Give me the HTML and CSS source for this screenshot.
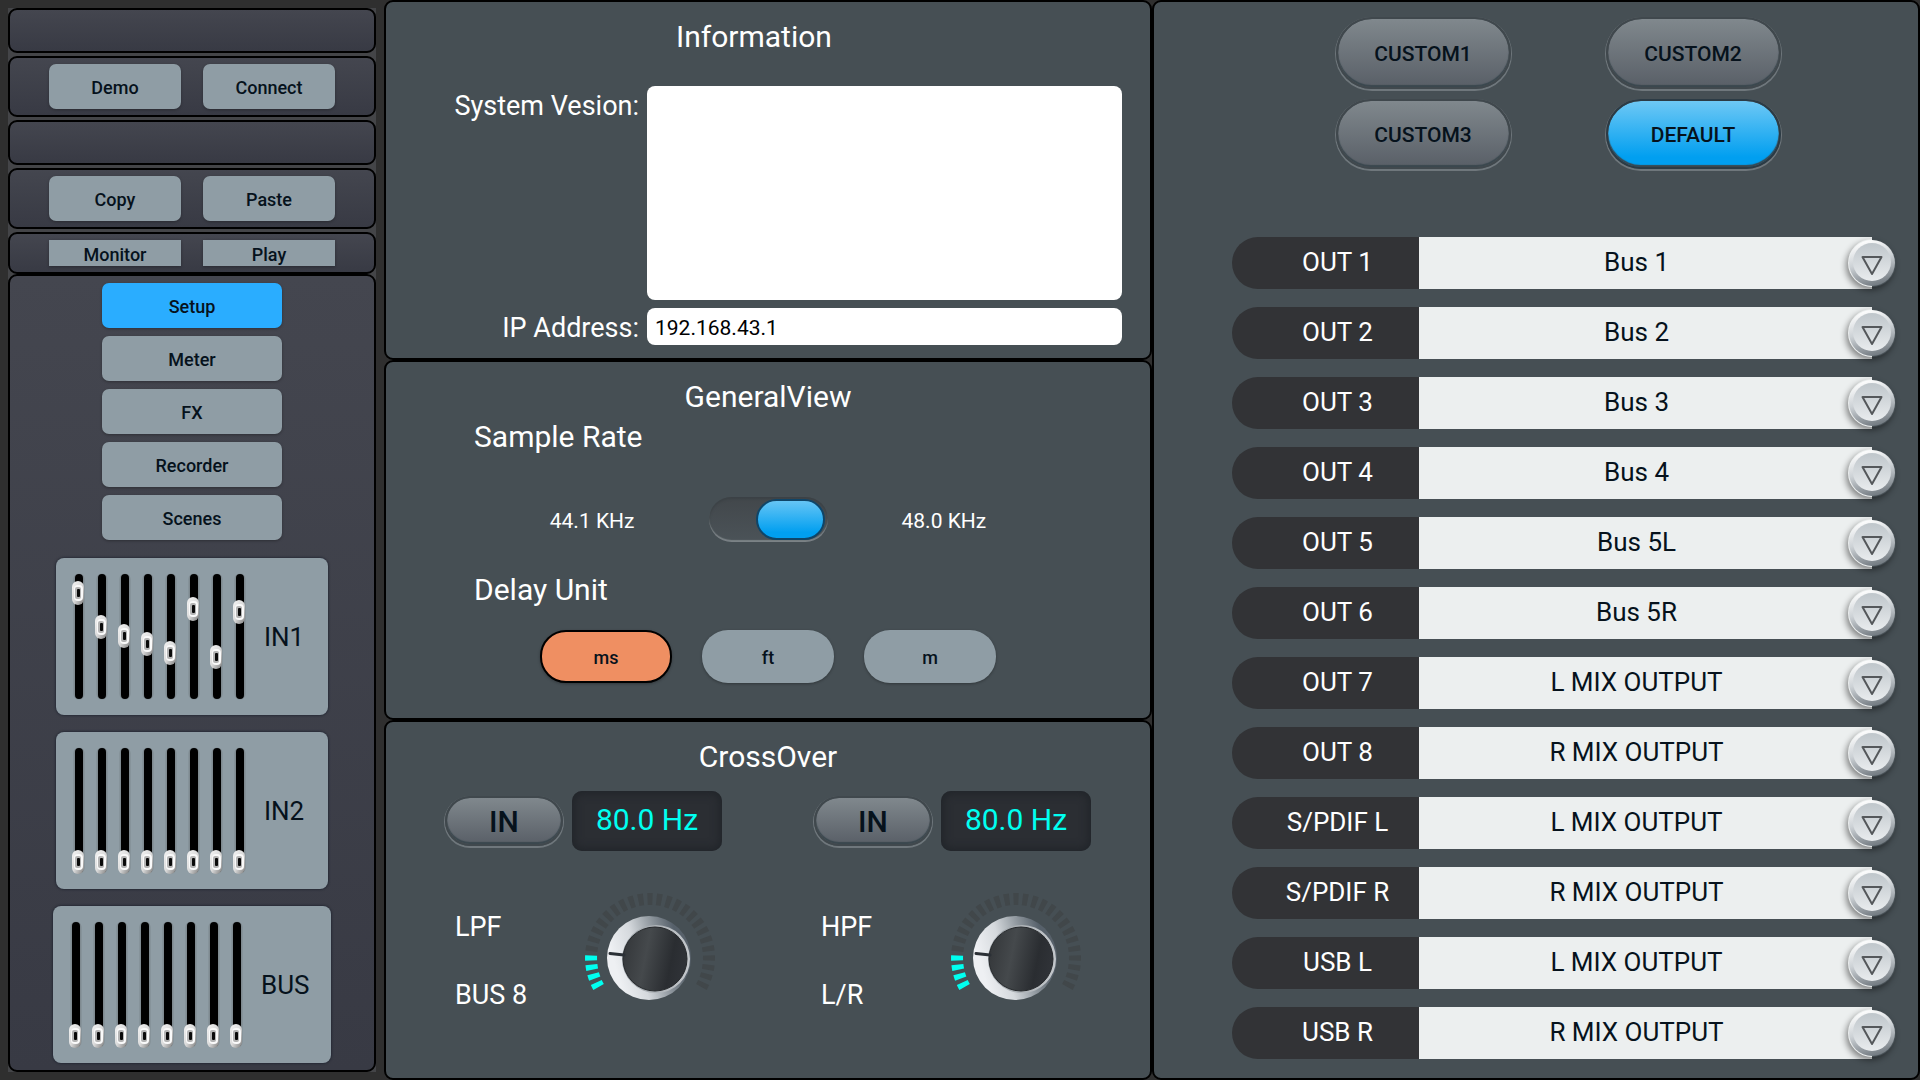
FILE: index.html
```html
<!DOCTYPE html>
<html lang="en">
<head>
    <meta charset="UTF-8">
    <meta name="viewport" content="width=device-width, initial-scale=1.0">
    <title>Mixer Setup</title>
    <link rel="stylesheet" href="styles.css">
</head>
<body>

    <!-- Shared drawings -->
    <svg class="defs" width="0" height="0" aria-hidden="true">
        <defs>
            <linearGradient id="thumbFill" x1="0" y1="0" x2="1" y2="1">
                <stop offset="0" stop-color="#f4f4f4"/>
                <stop offset="0.5" stop-color="#dcdcdc"/>
                <stop offset="1" stop-color="#7d7d7d"/>
            </linearGradient>
            <linearGradient id="ringFill" x1="0.1" y1="0.6" x2="1" y2="0.35">
                <stop offset="0" stop-color="#eef0f3"/>
                <stop offset="0.3" stop-color="#d5d9dd"/>
                <stop offset="0.6" stop-color="#8d959c"/>
                <stop offset="0.85" stop-color="#56606a"/>
                <stop offset="1" stop-color="#59626b"/>
            </linearGradient>
            <linearGradient id="capFill" x1="0" y1="0.4" x2="1" y2="0.6">
                <stop offset="0" stop-color="#35383b"/>
                <stop offset="0.35" stop-color="#45494c"/>
                <stop offset="0.75" stop-color="#2a2d31"/>
                <stop offset="1" stop-color="#303338"/>
            </linearGradient>
            <linearGradient id="rimFill" x1="0" y1="0" x2="1" y2="0">
                <stop offset="0" stop-color="#9aa0a5"/>
                <stop offset="1" stop-color="#c3c7cb"/>
            </linearGradient>
            <linearGradient id="arrowRim" x1="0.35" y1="0" x2="0.65" y2="1">
                <stop offset="0" stop-color="#fff"/>
                <stop offset="0.45" stop-color="#cdd2d6"/>
                <stop offset="1" stop-color="#6d757c"/>
            </linearGradient>
            <linearGradient id="arrowFace" x1="0" y1="0" x2="0" y2="1">
                <stop offset="0" stop-color="#bfc6cb"/>
                <stop offset="1" stop-color="#e9ecee"/>
            </linearGradient>
        </defs>
        <symbol id="thumb" viewBox="0 0 12 24">
            <rect width="12" height="24" rx="6" fill="url(#thumbFill)"/>
            <rect x="2" y="4" width="9" height="16" rx="4" fill="#fafafa"/>
            <rect x="3" y="6" width="6" height="12" rx="2" fill="#b4b4b4"/>
            <rect x="5" y="8" width="3" height="8" rx="1" fill="#0a0a0a"/>
        </symbol>
        <symbol id="tracks" viewBox="0 0 200 157">
            <path d="M23 21V136M46 21V136M69 21V136M92 21V136M115 21V136M138 21V136M161 21V136M184 21V136" stroke="#7f8a90" stroke-width="11" stroke-linecap="round"/>
            <path d="M23 20V137M46 20V137M69 20V137M92 20V137M115 20V137M138 20V137M161 20V137M184 20V137" stroke="#000" stroke-width="8" stroke-linecap="round"/>
        </symbol>
        <symbol id="dial" viewBox="0 0 130 130">
            <!-- 27 ticks, 9 degrees apart, the first four lit -->
            <path d="M13.6 94A59 59 0 1 1 116.4 94" fill="none" stroke="#41474a" stroke-width="12" pathLength="239" stroke-dasharray="5 4"/>
            <path d="M13.6 94A59 59 0 0 1 6.1 62.4" fill="none" stroke="#464f54" stroke-width="14"/>
            <path d="M13.6 94A59 59 0 0 1 6.1 62.4" fill="none" stroke="#00fff0" stroke-width="12" pathLength="32" stroke-dasharray="5 4"/>
            <circle cx="64" cy="65" r="42" fill="url(#ringFill)"/>
            <circle cx="71" cy="66" r="34" fill="url(#rimFill)"/>
            <circle cx="70" cy="66" r="32" fill="url(#capFill)" stroke="#26292c"/>
            <path d="M25 60.500L39 62" stroke="#2b3036" stroke-width="3" stroke-linecap="round"/>
        </symbol>
        <symbol id="arrow" viewBox="0 0 48 48">
            <circle cx="24" cy="24" r="23" fill="url(#arrowRim)"/>
            <circle cx="24" cy="23" r="19" fill="url(#arrowFace)"/>
            <path d="M14.500 18H33.500L24 35Z" fill="none" stroke="#55585b" stroke-width="2" stroke-linejoin="round"/>
        </symbol>
    </svg>

    <div class="mixer">
        <!-- Sidebar -->
        <aside class="sidebar">
            <div class="sidebar-stack">
                <div class="box empty"></div>
                <div class="box pair">
                    <button type="button" class="btn">Demo</button>
                    <button type="button" class="btn">Connect</button>
                </div>
                <div class="box empty"></div>
                <div class="box pair">
                    <button type="button" class="btn">Copy</button>
                    <button type="button" class="btn">Paste</button>
                </div>
                <div class="box pair slim">
                    <button type="button" class="btn flat">Monitor</button>
                    <button type="button" class="btn flat">Play</button>
                </div>
                <nav class="box menu">
                    <button type="button" class="btn active">Setup</button>
                    <button type="button" class="btn">Meter</button>
                    <button type="button" class="btn">FX</button>
                    <button type="button" class="btn">Recorder</button>
                    <button type="button" class="btn">Scenes</button>

                    <div class="banks">
                        <button type="button" class="bank">
                            <svg width="200" height="157" viewBox="0 0 200 157" aria-hidden="true">
                                <use href="#tracks"/>
                                <use href="#thumb" x="16" y="23" width="12" height="24"/>
                                <use href="#thumb" x="39" y="57" width="12" height="24"/>
                                <use href="#thumb" x="62" y="66" width="12" height="24"/>
                                <use href="#thumb" x="85" y="74" width="12" height="24"/>
                                <use href="#thumb" x="108" y="83" width="12" height="24"/>
                                <use href="#thumb" x="131" y="39" width="12" height="24"/>
                                <use href="#thumb" x="154" y="87" width="12" height="24"/>
                                <use href="#thumb" x="177" y="42" width="12" height="24"/>
                            </svg>
                            IN1
                        </button>
                        <button type="button" class="bank">
                            <svg width="200" height="157" viewBox="0 0 200 157" aria-hidden="true">
                                <use href="#tracks"/>
                                <use href="#thumb" x="16" y="118" width="12" height="24"/>
                                <use href="#thumb" x="39" y="118" width="12" height="24"/>
                                <use href="#thumb" x="62" y="118" width="12" height="24"/>
                                <use href="#thumb" x="85" y="118" width="12" height="24"/>
                                <use href="#thumb" x="108" y="118" width="12" height="24"/>
                                <use href="#thumb" x="131" y="118" width="12" height="24"/>
                                <use href="#thumb" x="154" y="118" width="12" height="24"/>
                                <use href="#thumb" x="177" y="118" width="12" height="24"/>
                            </svg>
                            IN2
                        </button>
                        <button type="button" class="bank wide">
                            <svg width="200" height="157" viewBox="0 0 200 157" aria-hidden="true">
                                <use href="#tracks"/>
                                <use href="#thumb" x="16" y="118" width="12" height="24"/>
                                <use href="#thumb" x="39" y="118" width="12" height="24"/>
                                <use href="#thumb" x="62" y="118" width="12" height="24"/>
                                <use href="#thumb" x="85" y="118" width="12" height="24"/>
                                <use href="#thumb" x="108" y="118" width="12" height="24"/>
                                <use href="#thumb" x="131" y="118" width="12" height="24"/>
                                <use href="#thumb" x="154" y="118" width="12" height="24"/>
                                <use href="#thumb" x="177" y="118" width="12" height="24"/>
                            </svg>
                            BUS
                        </button>
                    </div>
                </nav>
            </div>
        </aside>

        <!-- Settings -->
        <main class="settings">
            <section class="panel information">
                <h2>Information</h2>
                <div class="fields">
                    <label for="version">System Vesion:</label>
                    <textarea id="version" readonly></textarea>
                    <label for="ip">IP Address:</label>
                    <input type="text" id="ip" value="192.168.43.1" readonly>
                </div>
            </section>

            <section class="panel general">
                <h2>GeneralView</h2>
                <h3>Sample Rate</h3>
                <div class="rate">
                    <span>44.1 KHz</span>
                    <input type="checkbox" class="toggle" aria-label="Sample rate 48.0 KHz" checked>
                    <span>48.0 KHz</span>
                </div>
                <h3 class="delay-title">Delay Unit</h3>
                <div class="units">
                    <button type="button" class="unit selected">ms</button>
                    <button type="button" class="unit">ft</button>
                    <button type="button" class="unit">m</button>
                </div>
            </section>

            <section class="panel crossover">
                <h2>CrossOver</h2>
                <div class="filters">
                    <div class="filter">
                        <button type="button" class="glossy in-btn">IN</button>
                        <output class="readout">80.0 Hz</output>
                    </div>
                    <div class="filter">
                        <button type="button" class="glossy in-btn">IN</button>
                        <output class="readout">80.0 Hz</output>
                    </div>
                </div>
                <div class="knobs">
                    <div class="knob-group">
                        <div class="knob-text">
                            <label for="lpf">LPF</label>
                            <span>BUS 8</span>
                        </div>
                        <div class="knob">
                            <svg width="130" height="130" aria-hidden="true"><use href="#dial"/></svg>
                            <input type="range" id="lpf" min="0" max="26" value="3">
                        </div>
                    </div>
                    <div class="knob-group">
                        <div class="knob-text">
                            <label for="hpf">HPF</label>
                            <span>L/R</span>
                        </div>
                        <div class="knob">
                            <svg width="130" height="130" aria-hidden="true"><use href="#dial"/></svg>
                            <input type="range" id="hpf" min="0" max="26" value="3">
                        </div>
                    </div>
                </div>
            </section>
        </main>

        <!-- Output routing -->
        <section class="panel routing">
            <div class="presets">
                <button type="button" class="glossy preset">CUSTOM1</button>
                <button type="button" class="glossy preset">CUSTOM2</button>
                <button type="button" class="glossy preset">CUSTOM3</button>
                <button type="button" class="glossy preset on">DEFAULT</button>
            </div>
            <div class="outputs">
                <div class="output">
                    <label for="out1">OUT 1</label>
                    <select id="out1"><option>Bus 1</option></select>
                    <svg class="arrow" aria-hidden="true"><use href="#arrow"/></svg>
                </div>
                <div class="output">
                    <label for="out2">OUT 2</label>
                    <select id="out2"><option>Bus 2</option></select>
                    <svg class="arrow" aria-hidden="true"><use href="#arrow"/></svg>
                </div>
                <div class="output">
                    <label for="out3">OUT 3</label>
                    <select id="out3"><option>Bus 3</option></select>
                    <svg class="arrow" aria-hidden="true"><use href="#arrow"/></svg>
                </div>
                <div class="output">
                    <label for="out4">OUT 4</label>
                    <select id="out4"><option>Bus 4</option></select>
                    <svg class="arrow" aria-hidden="true"><use href="#arrow"/></svg>
                </div>
                <div class="output">
                    <label for="out5">OUT 5</label>
                    <select id="out5"><option>Bus 5L</option></select>
                    <svg class="arrow" aria-hidden="true"><use href="#arrow"/></svg>
                </div>
                <div class="output">
                    <label for="out6">OUT 6</label>
                    <select id="out6"><option>Bus 5R</option></select>
                    <svg class="arrow" aria-hidden="true"><use href="#arrow"/></svg>
                </div>
                <div class="output">
                    <label for="out7">OUT 7</label>
                    <select id="out7"><option>L MIX OUTPUT</option></select>
                    <svg class="arrow" aria-hidden="true"><use href="#arrow"/></svg>
                </div>
                <div class="output">
                    <label for="out8">OUT 8</label>
                    <select id="out8"><option>R MIX OUTPUT</option></select>
                    <svg class="arrow" aria-hidden="true"><use href="#arrow"/></svg>
                </div>
                <div class="output">
                    <label for="spdifl">S/PDIF L</label>
                    <select id="spdifl"><option>L MIX OUTPUT</option></select>
                    <svg class="arrow" aria-hidden="true"><use href="#arrow"/></svg>
                </div>
                <div class="output">
                    <label for="spdifr">S/PDIF R</label>
                    <select id="spdifr"><option>R MIX OUTPUT</option></select>
                    <svg class="arrow" aria-hidden="true"><use href="#arrow"/></svg>
                </div>
                <div class="output">
                    <label for="usbl">USB L</label>
                    <select id="usbl"><option>L MIX OUTPUT</option></select>
                    <svg class="arrow" aria-hidden="true"><use href="#arrow"/></svg>
                </div>
                <div class="output">
                    <label for="usbr">USB R</label>
                    <select id="usbr"><option>R MIX OUTPUT</option></select>
                    <svg class="arrow" aria-hidden="true"><use href="#arrow"/></svg>
                </div>
            </div>
        </section>
    </div>

</body>
</html>
```
FILE: styles.css
```css
*,
*::before {
    box-sizing: border-box;
}

body {
    margin: 0;
    font-family: Roboto, sans-serif;
    background-color: #2f2f2f;
    color: #fff;
}

button,
input,
select,
textarea {
    font-family: inherit;
    margin: 0;
    padding: 0;
    border: none;
}

button {
    cursor: pointer;
    color: #06121c;
}

.defs {
    position: absolute;
}

.mixer {
    display: grid;
    grid-template-columns: 1fr 2fr 2fr;
    min-height: 100vh;
}

/* Sidebar */
.sidebar {
    padding: 8px;
}

.sidebar-stack {
    display: flex;
    flex-direction: column;
    height: 100%;
    background-color: #444548;
}

.box {
    border: 2px solid #000;
    border-radius: 9px;
    background: linear-gradient(#44464f, #383a44);
    margin-bottom: 3px;
}

.empty {
    height: 45px;
}

.pair {
    display: flex;
    justify-content: center;
    align-items: center;
    gap: 22px;
    height: 61px;
}

.slim {
    height: 42px;
    margin-bottom: 0;
}

.btn {
    width: 132px;
    height: 45px;
    padding-top: 2px;
    border-radius: 7px;
    background-color: #8f9da5;
    box-shadow: 0 1px 3px rgba(0, 0, 0, 0.3);
    font-size: 18px;
    font-weight: 500;
}

.btn.flat {
    height: 26px;
    border-radius: 0;
}

.menu {
    flex: 1;
    display: flex;
    flex-direction: column;
    align-items: center;
    gap: 8px;
    margin-bottom: 0;
    padding: 7px 0;
}

.menu .btn {
    width: 180px;
}

.menu .active {
    background-color: #2aadff;
}

.banks {
    display: flex;
    flex-direction: column;
    align-items: center;
    gap: 17px;
    margin-top: 10px;
}

.bank {
    display: flex;
    align-items: center;
    gap: 8px;
    width: 272px;
    height: 157px;
    border-radius: 8px;
    background-color: #8f9da5;
    box-shadow: 0 0 2px 1px rgba(20, 25, 40, 0.5);
    font-size: 26px;
}

.bank.wide {
    width: 278px;
}

/* Panels */
.settings {
    display: grid;
    grid-template-rows: repeat(3, 1fr);
}

.panel {
    border: 2px solid #000;
    border-radius: 9px;
    background-color: #464f54;
    padding-top: 15px;
}

h2,
h3 {
    margin: 0;
    font-size: 30px;
    font-weight: 400;
    line-height: 40px;
}

h2 {
    text-align: center;
}

/* Information */
.information {
    padding-right: 28px;
}

.fields {
    display: grid;
    grid-template-columns: 253px 1fr;
    gap: 8px;
    margin-top: 29px;
}

.fields label {
    text-align: right;
    font-size: 27px;
    line-height: 40px;
}

.fields textarea,
.fields input {
    border-radius: 8px;
    background-color: #fff;
    padding: 2px 8px 0;
    color: #000;
    font-size: 21px;
}

.fields textarea {
    height: 214px;
    resize: none;
}

.fields input {
    height: 37px;
}

/* General view */
.general h3 {
    padding-left: 88px;
}

.rate {
    display: flex;
    justify-content: center;
    align-items: center;
    gap: 74px;
    margin-top: 40px;
    font-size: 21px;
    line-height: 24px;
}

.rate span {
    padding-top: 2px;
}

.toggle {
    appearance: none;
    display: flex;
    justify-content: flex-start;
    width: 119px;
    height: 45px;
    padding: 2px 3px;
    border-radius: 23px;
    background: linear-gradient(#42474b, #4b5358);
    box-shadow: inset 0 2px 2px #3c4246, inset 0 -2px 1px #7b8286;
    cursor: pointer;
}

.toggle:checked {
    justify-content: flex-end;
}

.toggle::before {
    content: "";
    width: 69px;
    height: 41px;
    border: 2px solid #0f4568;
    border-radius: 21px;
    background: linear-gradient(#66c5f5, #019ff0 85%);
}

.general .delay-title {
    margin-top: 28px;
}

.units {
    display: flex;
    justify-content: center;
    gap: 30px;
    margin-top: 20px;
}

.unit {
    width: 132px;
    height: 53px;
    padding-top: 2px;
    border-radius: 26px;
    background-color: #8f9da5;
    box-shadow: 0 1px 3px rgba(0, 0, 0, 0.3);
    font-size: 18px;
    font-weight: 500;
}

.unit.selected {
    border: 2px solid #000;
    background-color: #ef8f62;
}

/* Crossover */
.filters {
    display: flex;
    justify-content: center;
    gap: 92px;
    margin-top: 14px;
}

.filter {
    display: flex;
    align-items: center;
    gap: 9px;
}

.glossy {
    border: 2px solid #40484d;
    background: linear-gradient(#80888d, #595f67) padding-box;
    box-shadow: inset 0 -2px 1px #3a474e, 0 1px 0 1px #6f777c;
    font-weight: 500;
}

.in-btn {
    width: 118px;
    height: 50px;
    border-radius: 25px;
    font-size: 30px;
}

.readout {
    width: 150px;
    height: 60px;
    border-radius: 10px;
    background-color: #2b2e33;
    box-shadow: inset 0 0 10px 2px #202429;
    color: #00fff0;
    font-size: 30px;
    line-height: 58px;
    text-align: center;
}

.knobs {
    display: flex;
    justify-content: center;
    gap: 106px;
    margin-top: 42px;
}

.knob-group {
    display: flex;
}

.knob-text {
    display: flex;
    flex-direction: column;
    gap: 28px;
    width: 130px;
    padding-top: 14px;
    font-size: 27px;
    line-height: 40px;
}

.knob {
    position: relative;
    width: 130px;
    height: 130px;
}

/* invisible slider on top of the drawn dial */
.knob input {
    position: absolute;
    inset: 0;
    width: 100%;
    height: 100%;
    opacity: 0;
    cursor: pointer;
}

/* Output routing */
.routing {
    padding-left: 78px;
    padding-right: 46px;
}

.presets {
    display: grid;
    grid-template-columns: 175px 175px;
    grid-template-rows: 72px 70px;
    justify-content: center;
    gap: 10px 95px;
    padding-left: 12px;
}

.preset {
    padding-top: 2px;
    border-radius: 36px;
    font-size: 21px;
}

.preset.on {
    background: linear-gradient(#6ec8f5, #019ff0 85%) padding-box;
    border-color: #2c3b45;
}

.outputs {
    display: flex;
    flex-direction: column;
    gap: 18px;
    margin-top: 68px;
}

.output {
    position: relative;
    display: flex;
    height: 52px;
    font-size: 26px;
}

.output label {
    width: 187px;
    padding-left: 24px;
    border-radius: 26px 0 0 26px;
    background-color: #323336;
    line-height: 50px;
    text-align: center;
}

.output select {
    appearance: none;
    flex: 1;
    padding-right: 18px;
    padding-bottom: 2px;
    border-radius: 0;
    background-color: #ecefef;
    color: #06121c;
    font-size: 26px;
    text-align: center;
    text-align-last: center;
}

.output .arrow {
    position: absolute;
    top: 2px;
    right: -24px;
    width: 48px;
    height: 48px;
    border-radius: 50%;
    box-shadow: -2px 3px 6px rgba(0, 0, 0, 0.45);
    pointer-events: none;
}
```
